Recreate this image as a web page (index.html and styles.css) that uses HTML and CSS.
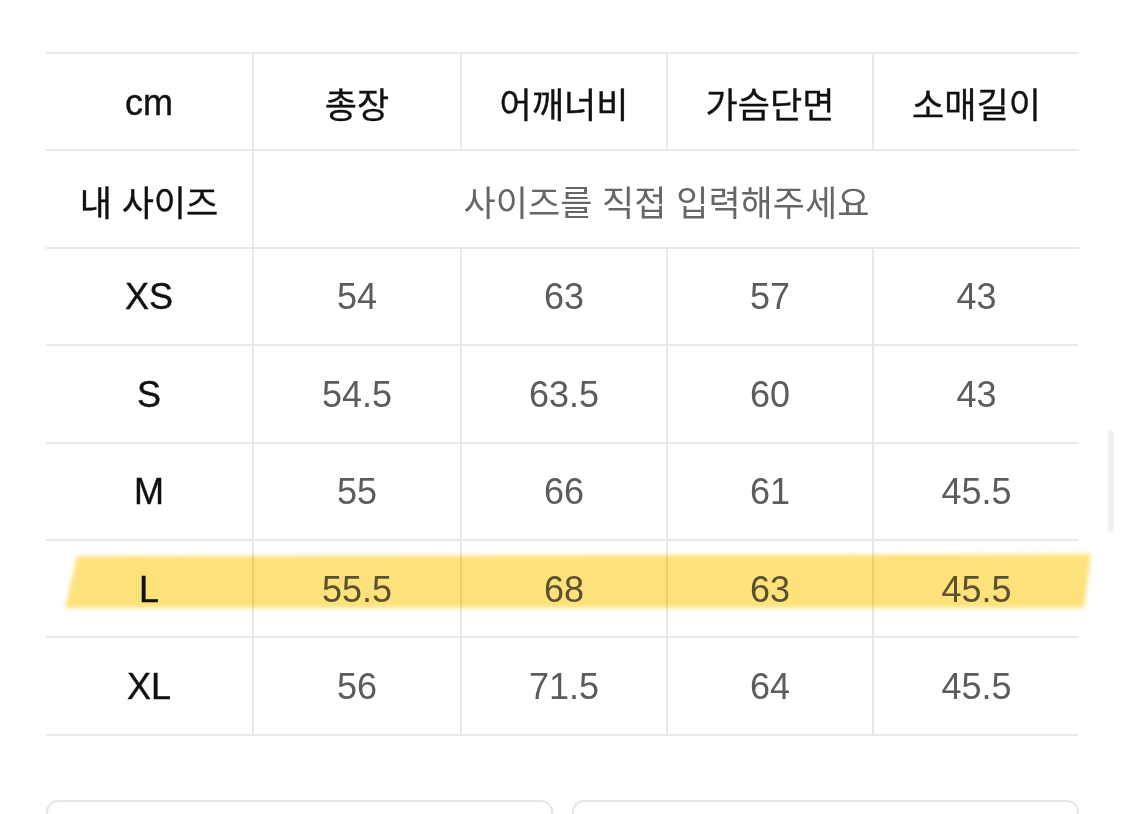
FILE: index.html
```html
<!DOCTYPE html>
<html lang="ko">
<head>
<meta charset="utf-8">
<link rel="stylesheet" href="styles.css">
</head>
<body>
<div class="page">
  <div class="table">
    <div class="row head">
      <div class="cell key latin">cm</div>
      <div class="cell key">총장</div>
      <div class="cell key">어깨너비</div>
      <div class="cell key">가슴단면</div>
      <div class="cell key">소매길이</div>
    </div>
    <div class="row">
      <div class="cell key">내 사이즈</div>
      <div class="cell val span4">사이즈를 직접 입력해주세요</div>
    </div>
    <div class="row">
      <div class="cell key latin">XS</div>
      <div class="cell val">54</div>
      <div class="cell val">63</div>
      <div class="cell val">57</div>
      <div class="cell val">43</div>
    </div>
    <div class="row">
      <div class="cell key latin">S</div>
      <div class="cell val">54.5</div>
      <div class="cell val">63.5</div>
      <div class="cell val">60</div>
      <div class="cell val">43</div>
    </div>
    <div class="row">
      <div class="cell key latin">M</div>
      <div class="cell val">55</div>
      <div class="cell val">66</div>
      <div class="cell val">61</div>
      <div class="cell val">45.5</div>
    </div>
    <div class="row">
      <div class="cell key latin">L</div>
      <div class="cell val">55.5</div>
      <div class="cell val">68</div>
      <div class="cell val">63</div>
      <div class="cell val">45.5</div>
    </div>
    <div class="row">
      <div class="cell key latin">XL</div>
      <div class="cell val">56</div>
      <div class="cell val">71.5</div>
      <div class="cell val">64</div>
      <div class="cell val">45.5</div>
    </div>
    <div class="marker"><div class="marker-shape"></div></div>
  </div>
  <div class="boxes">
    <div class="box"></div>
    <div class="box"></div>
  </div>
</div>
<div class="scrollbar"></div>
</body>
</html>
```

FILE: styles.css
```css
html, body {
  margin: 0;
  padding: 0;
  background: #ffffff;
}

body {
  width: 1125px;
  height: 814px;
  overflow: hidden;
  position: relative;
  font-family: "Liberation Sans", "Noto Sans CJK KR", Arial, sans-serif;
}

.page {
  padding: 52px 46px 0 46px;
}

.table {
  position: relative;
  width: 1033px;
  border-top: 2px solid #e9e9e9;
}

.row {
  display: grid;
  grid-template-columns: 208px 208px 206px 206px 205px;
  height: 97.4px;
}

.cell {
  box-sizing: border-box;
  display: flex;
  align-items: center;
  justify-content: center;
  border-bottom: 2px solid #e9e9e9;
  border-right: 2px solid #e9e9e9;
  padding-top: 2px;
}

.cell:last-child {
  border-right: none;
}

.span4 {
  grid-column: 2 / 6;
}

.key {
  color: #111111;
  font-size: 35px;
  font-weight: 400;
  -webkit-text-stroke: 0.35px #111111;
}

.key.latin {
  font-size: 36px;
  -webkit-text-stroke: 0.4px #111111;
}

.val {
  color: #5c5c5c;
  font-size: 36px;
}

.span4 {
  font-size: 35px;
  color: #666666;
}

.marker {
  position: absolute;
  left: 19px;
  top: 500px;
  width: 1028px;
  height: 54px;
  filter: blur(2px);
  mix-blend-mode: multiply;
  pointer-events: none;
}

.marker-shape {
  width: 100%;
  height: 100%;
  background: #fde27c;
  clip-path: polygon(12px 2px, 1026px 0, 1019px 100%, 0 100%);
}

.boxes {
  display: flex;
  gap: 19px;
  margin-top: 64px;
  width: 1033px;
}

.box {
  flex: 1;
  height: 80px;
  border: 2px solid #e6e6e6;
  border-radius: 12px;
}

.scrollbar {
  position: absolute;
  left: 1108px;
  top: 430px;
  width: 6px;
  height: 102px;
  border-radius: 3px;
  background: #f1f1f1;
}
```
